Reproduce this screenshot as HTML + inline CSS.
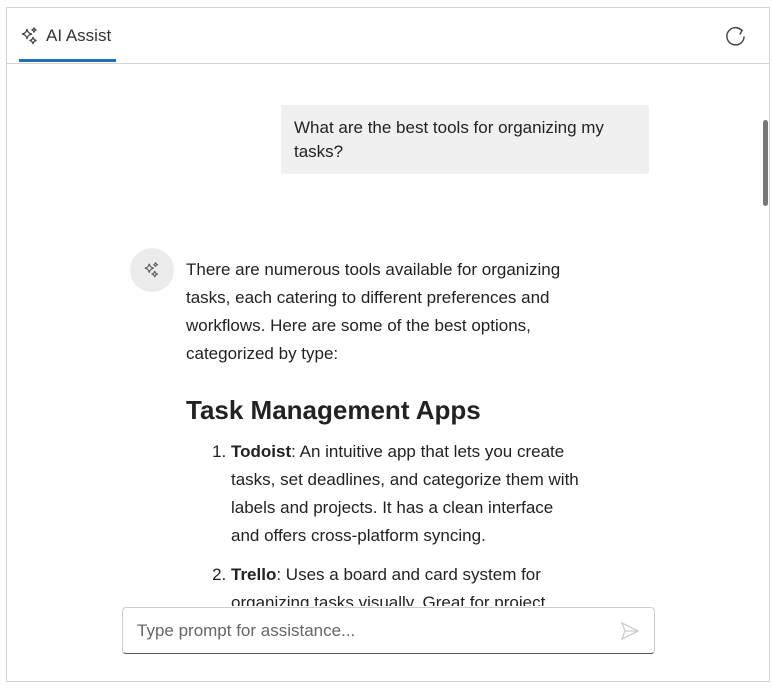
<!DOCTYPE html>
<html><head><style>
*{margin:0;padding:0;box-sizing:border-box}
body{width:773px;height:693px;background:#fff;font-family:"Liberation Sans",sans-serif;color:#222;position:relative;overflow:hidden}
.frame{position:absolute;left:6px;top:7px;width:764px;height:675px;border:1px solid #d4d4d4}
.hdr{position:absolute;left:6px;top:7px;width:764px;height:57px;border-bottom:1px solid #d4d4d4}
.tab{position:absolute;left:20px;top:26px;font-size:17px;color:#333;display:flex;align-items:center;gap:6px}
.ul{position:absolute;left:19px;top:59px;width:97px;height:3px;background:#1f6fbf}
.clip{position:absolute;left:7px;top:64px;width:762px;height:542px;overflow:hidden}
.bubble{position:absolute;left:274px;top:41px;width:368px;height:69px;background:#f0f0f0;border-radius:2px;padding:11px 13px;font-size:17px;line-height:24px;color:#222}
.av{position:absolute;left:123px;top:184px;width:44px;height:44px;border-radius:50%;background:#ebebeb;display:flex;align-items:center;justify-content:center}
.ans{position:absolute;left:179px;top:192px;width:400px;font-size:17px;line-height:28px;color:#222}
h2{font-size:26px;font-weight:600;margin:25px 0 11px;line-height:34px}
ol{padding-left:45px}
li{margin-bottom:11px;padding-left:0}
.sb{position:absolute;left:763px;top:120px;width:5px;height:86px;background:#777;border-radius:3px}
.inp{position:absolute;left:122px;top:607px;width:533px;height:47px;border:1px solid #ccc;border-bottom:1px solid #555;border-radius:4px;background:#fff;font-size:17px;color:#666;padding:13px 14px}
</style></head><body>
<div class="frame"></div>
<div class="hdr"></div>
<div class="tab"><svg width="20" height="20" viewBox="0 0 20 20" fill="none" stroke="#444" stroke-width="1.2"><path d="M7 3 Q7.6 7.4 12 8 Q7.6 8.6 7 13 Q6.4 8.6 2 8 Q6.4 7.4 7 3Z"/><path d="M14 1.5 Q14.3 3.7 16.5 4 Q14.3 4.3 14 6.5 Q13.7 4.3 11.5 4 Q13.7 3.7 14 1.5Z"/><path d="M13 11 Q13.4 14.1 16.5 14.5 Q13.4 14.9 13 18 Q12.6 14.9 9.5 14.5 Q12.6 14.1 13 11Z"/></svg>AI Assist</div>
<div class="ul"></div>
<svg style="position:absolute;left:724px;top:25px" width="23" height="23" viewBox="0 0 24 24" fill="none" stroke="#444" stroke-width="1.5"><path d="M18.5 5.5 A9 9 0 1 0 21 12"/><path d="M14 3 L19 5.5 L16.5 10"/></svg>
<div class="clip">
<div class="bubble">What are the best tools for organizing my tasks?</div>
<div class="av"><svg width="18" height="18" viewBox="0 0 20 20" fill="none" stroke="#555" stroke-width="1.2"><path d="M7 3 Q7.6 7.4 12 8 Q7.6 8.6 7 13 Q6.4 8.6 2 8 Q6.4 7.4 7 3Z"/><path d="M14 1.5 Q14.3 3.7 16.5 4 Q14.3 4.3 14 6.5 Q13.7 4.3 11.5 4 Q13.7 3.7 14 1.5Z"/><path d="M13 11 Q13.4 14.1 16.5 14.5 Q13.4 14.9 13 18 Q12.6 14.9 9.5 14.5 Q12.6 14.1 13 11Z"/></svg></div>
<div class="ans">
<p>There are numerous tools available for organizing tasks, each catering to different preferences and workflows. Here are some of the best options, categorized by type:</p>
<h2>Task Management Apps</h2>
<ol>
<li><b>Todoist</b>: An intuitive app that lets you create tasks, set deadlines, and categorize them with labels and projects. It has a clean interface and offers cross-platform syncing.</li>
<li><b>Trello</b>: Uses a board and card system for organizing tasks visually. Great for project management and collaboration.</li>
</ol>
</div>
</div>
<div class="sb"></div>
<div class="inp">Type prompt for assistance...<svg style="position:absolute;right:14px;top:13px" width="20" height="20" viewBox="0 0 20 20" fill="none" stroke="#ccc" stroke-width="1.3"><path d="M2 2 L18 10 L2 18 L5 10 Z M5 10 H18"/></svg></div>
</body></html>
